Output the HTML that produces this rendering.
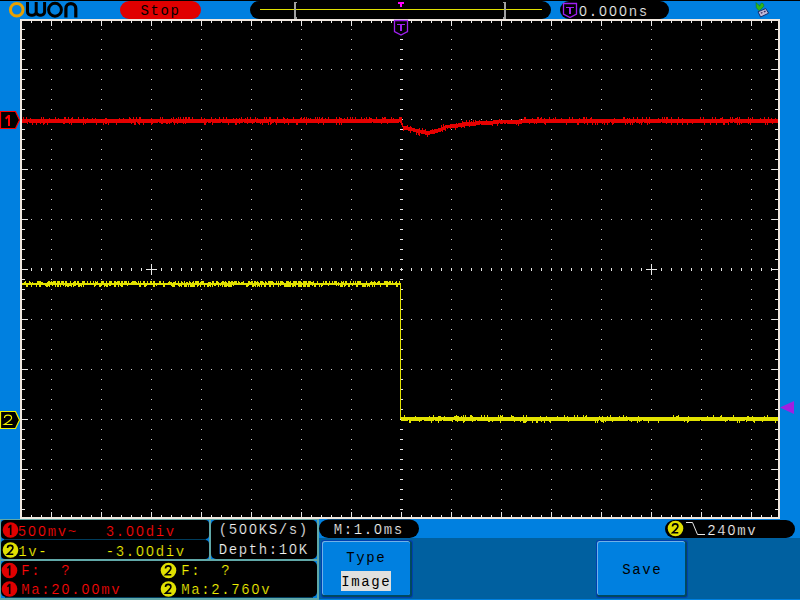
<!DOCTYPE html>
<html><head><meta charset="utf-8"><style>
html,body{margin:0;padding:0;width:800px;height:600px;overflow:hidden;background:#0080E0}
.t{position:absolute;font-family:"Liberation Mono",monospace;font-size:14px;letter-spacing:1.6px;white-space:pre;line-height:16px}
</style></head><body>
<svg width="800" height="600" style="position:absolute;left:0;top:0" shape-rendering="crispEdges"><rect x="0" y="0" width="800" height="1" fill="#000"/><rect x="20" y="19" width="760" height="500" fill="#F0E8E0"/><rect x="22" y="21" width="756" height="496" fill="#000"/><path d="M31 69h1v1h-1zM41 69h1v1h-1zM51 69h1v1h-1zM61 69h1v1h-1zM71 69h1v1h-1zM81 69h1v1h-1zM91 69h1v1h-1zM101 69h1v1h-1zM111 69h1v1h-1zM121 69h1v1h-1zM131 69h1v1h-1zM141 69h1v1h-1zM151 69h1v1h-1zM161 69h1v1h-1zM171 69h1v1h-1zM181 69h1v1h-1zM191 69h1v1h-1zM201 69h1v1h-1zM211 69h1v1h-1zM221 69h1v1h-1zM231 69h1v1h-1zM241 69h1v1h-1zM251 69h1v1h-1zM261 69h1v1h-1zM271 69h1v1h-1zM281 69h1v1h-1zM291 69h1v1h-1zM301 69h1v1h-1zM311 69h1v1h-1zM321 69h1v1h-1zM331 69h1v1h-1zM341 69h1v1h-1zM351 69h1v1h-1zM361 69h1v1h-1zM371 69h1v1h-1zM381 69h1v1h-1zM391 69h1v1h-1zM411 69h1v1h-1zM421 69h1v1h-1zM431 69h1v1h-1zM441 69h1v1h-1zM451 69h1v1h-1zM461 69h1v1h-1zM471 69h1v1h-1zM481 69h1v1h-1zM491 69h1v1h-1zM501 69h1v1h-1zM511 69h1v1h-1zM521 69h1v1h-1zM531 69h1v1h-1zM541 69h1v1h-1zM551 69h1v1h-1zM561 69h1v1h-1zM571 69h1v1h-1zM581 69h1v1h-1zM591 69h1v1h-1zM601 69h1v1h-1zM611 69h1v1h-1zM621 69h1v1h-1zM631 69h1v1h-1zM641 69h1v1h-1zM651 69h1v1h-1zM661 69h1v1h-1zM671 69h1v1h-1zM681 69h1v1h-1zM691 69h1v1h-1zM701 69h1v1h-1zM711 69h1v1h-1zM721 69h1v1h-1zM731 69h1v1h-1zM741 69h1v1h-1zM751 69h1v1h-1zM761 69h1v1h-1zM771 69h1v1h-1zM31 119h1v1h-1zM41 119h1v1h-1zM51 119h1v1h-1zM61 119h1v1h-1zM71 119h1v1h-1zM81 119h1v1h-1zM91 119h1v1h-1zM101 119h1v1h-1zM111 119h1v1h-1zM121 119h1v1h-1zM131 119h1v1h-1zM141 119h1v1h-1zM151 119h1v1h-1zM161 119h1v1h-1zM171 119h1v1h-1zM181 119h1v1h-1zM191 119h1v1h-1zM201 119h1v1h-1zM211 119h1v1h-1zM221 119h1v1h-1zM231 119h1v1h-1zM241 119h1v1h-1zM251 119h1v1h-1zM261 119h1v1h-1zM271 119h1v1h-1zM281 119h1v1h-1zM291 119h1v1h-1zM301 119h1v1h-1zM311 119h1v1h-1zM321 119h1v1h-1zM331 119h1v1h-1zM341 119h1v1h-1zM351 119h1v1h-1zM361 119h1v1h-1zM371 119h1v1h-1zM381 119h1v1h-1zM391 119h1v1h-1zM411 119h1v1h-1zM421 119h1v1h-1zM431 119h1v1h-1zM441 119h1v1h-1zM451 119h1v1h-1zM461 119h1v1h-1zM471 119h1v1h-1zM481 119h1v1h-1zM491 119h1v1h-1zM501 119h1v1h-1zM511 119h1v1h-1zM521 119h1v1h-1zM531 119h1v1h-1zM541 119h1v1h-1zM551 119h1v1h-1zM561 119h1v1h-1zM571 119h1v1h-1zM581 119h1v1h-1zM591 119h1v1h-1zM601 119h1v1h-1zM611 119h1v1h-1zM621 119h1v1h-1zM631 119h1v1h-1zM641 119h1v1h-1zM651 119h1v1h-1zM661 119h1v1h-1zM671 119h1v1h-1zM681 119h1v1h-1zM691 119h1v1h-1zM701 119h1v1h-1zM711 119h1v1h-1zM721 119h1v1h-1zM731 119h1v1h-1zM741 119h1v1h-1zM751 119h1v1h-1zM761 119h1v1h-1zM771 119h1v1h-1zM31 169h1v1h-1zM41 169h1v1h-1zM51 169h1v1h-1zM61 169h1v1h-1zM71 169h1v1h-1zM81 169h1v1h-1zM91 169h1v1h-1zM101 169h1v1h-1zM111 169h1v1h-1zM121 169h1v1h-1zM131 169h1v1h-1zM141 169h1v1h-1zM151 169h1v1h-1zM161 169h1v1h-1zM171 169h1v1h-1zM181 169h1v1h-1zM191 169h1v1h-1zM201 169h1v1h-1zM211 169h1v1h-1zM221 169h1v1h-1zM231 169h1v1h-1zM241 169h1v1h-1zM251 169h1v1h-1zM261 169h1v1h-1zM271 169h1v1h-1zM281 169h1v1h-1zM291 169h1v1h-1zM301 169h1v1h-1zM311 169h1v1h-1zM321 169h1v1h-1zM331 169h1v1h-1zM341 169h1v1h-1zM351 169h1v1h-1zM361 169h1v1h-1zM371 169h1v1h-1zM381 169h1v1h-1zM391 169h1v1h-1zM411 169h1v1h-1zM421 169h1v1h-1zM431 169h1v1h-1zM441 169h1v1h-1zM451 169h1v1h-1zM461 169h1v1h-1zM471 169h1v1h-1zM481 169h1v1h-1zM491 169h1v1h-1zM501 169h1v1h-1zM511 169h1v1h-1zM521 169h1v1h-1zM531 169h1v1h-1zM541 169h1v1h-1zM551 169h1v1h-1zM561 169h1v1h-1zM571 169h1v1h-1zM581 169h1v1h-1zM591 169h1v1h-1zM601 169h1v1h-1zM611 169h1v1h-1zM621 169h1v1h-1zM631 169h1v1h-1zM641 169h1v1h-1zM651 169h1v1h-1zM661 169h1v1h-1zM671 169h1v1h-1zM681 169h1v1h-1zM691 169h1v1h-1zM701 169h1v1h-1zM711 169h1v1h-1zM721 169h1v1h-1zM731 169h1v1h-1zM741 169h1v1h-1zM751 169h1v1h-1zM761 169h1v1h-1zM771 169h1v1h-1zM31 219h1v1h-1zM41 219h1v1h-1zM51 219h1v1h-1zM61 219h1v1h-1zM71 219h1v1h-1zM81 219h1v1h-1zM91 219h1v1h-1zM101 219h1v1h-1zM111 219h1v1h-1zM121 219h1v1h-1zM131 219h1v1h-1zM141 219h1v1h-1zM151 219h1v1h-1zM161 219h1v1h-1zM171 219h1v1h-1zM181 219h1v1h-1zM191 219h1v1h-1zM201 219h1v1h-1zM211 219h1v1h-1zM221 219h1v1h-1zM231 219h1v1h-1zM241 219h1v1h-1zM251 219h1v1h-1zM261 219h1v1h-1zM271 219h1v1h-1zM281 219h1v1h-1zM291 219h1v1h-1zM301 219h1v1h-1zM311 219h1v1h-1zM321 219h1v1h-1zM331 219h1v1h-1zM341 219h1v1h-1zM351 219h1v1h-1zM361 219h1v1h-1zM371 219h1v1h-1zM381 219h1v1h-1zM391 219h1v1h-1zM411 219h1v1h-1zM421 219h1v1h-1zM431 219h1v1h-1zM441 219h1v1h-1zM451 219h1v1h-1zM461 219h1v1h-1zM471 219h1v1h-1zM481 219h1v1h-1zM491 219h1v1h-1zM501 219h1v1h-1zM511 219h1v1h-1zM521 219h1v1h-1zM531 219h1v1h-1zM541 219h1v1h-1zM551 219h1v1h-1zM561 219h1v1h-1zM571 219h1v1h-1zM581 219h1v1h-1zM591 219h1v1h-1zM601 219h1v1h-1zM611 219h1v1h-1zM621 219h1v1h-1zM631 219h1v1h-1zM641 219h1v1h-1zM651 219h1v1h-1zM661 219h1v1h-1zM671 219h1v1h-1zM681 219h1v1h-1zM691 219h1v1h-1zM701 219h1v1h-1zM711 219h1v1h-1zM721 219h1v1h-1zM731 219h1v1h-1zM741 219h1v1h-1zM751 219h1v1h-1zM761 219h1v1h-1zM771 219h1v1h-1zM31 319h1v1h-1zM41 319h1v1h-1zM51 319h1v1h-1zM61 319h1v1h-1zM71 319h1v1h-1zM81 319h1v1h-1zM91 319h1v1h-1zM101 319h1v1h-1zM111 319h1v1h-1zM121 319h1v1h-1zM131 319h1v1h-1zM141 319h1v1h-1zM151 319h1v1h-1zM161 319h1v1h-1zM171 319h1v1h-1zM181 319h1v1h-1zM191 319h1v1h-1zM201 319h1v1h-1zM211 319h1v1h-1zM221 319h1v1h-1zM231 319h1v1h-1zM241 319h1v1h-1zM251 319h1v1h-1zM261 319h1v1h-1zM271 319h1v1h-1zM281 319h1v1h-1zM291 319h1v1h-1zM301 319h1v1h-1zM311 319h1v1h-1zM321 319h1v1h-1zM331 319h1v1h-1zM341 319h1v1h-1zM351 319h1v1h-1zM361 319h1v1h-1zM371 319h1v1h-1zM381 319h1v1h-1zM391 319h1v1h-1zM411 319h1v1h-1zM421 319h1v1h-1zM431 319h1v1h-1zM441 319h1v1h-1zM451 319h1v1h-1zM461 319h1v1h-1zM471 319h1v1h-1zM481 319h1v1h-1zM491 319h1v1h-1zM501 319h1v1h-1zM511 319h1v1h-1zM521 319h1v1h-1zM531 319h1v1h-1zM541 319h1v1h-1zM551 319h1v1h-1zM561 319h1v1h-1zM571 319h1v1h-1zM581 319h1v1h-1zM591 319h1v1h-1zM601 319h1v1h-1zM611 319h1v1h-1zM621 319h1v1h-1zM631 319h1v1h-1zM641 319h1v1h-1zM651 319h1v1h-1zM661 319h1v1h-1zM671 319h1v1h-1zM681 319h1v1h-1zM691 319h1v1h-1zM701 319h1v1h-1zM711 319h1v1h-1zM721 319h1v1h-1zM731 319h1v1h-1zM741 319h1v1h-1zM751 319h1v1h-1zM761 319h1v1h-1zM771 319h1v1h-1zM31 369h1v1h-1zM41 369h1v1h-1zM51 369h1v1h-1zM61 369h1v1h-1zM71 369h1v1h-1zM81 369h1v1h-1zM91 369h1v1h-1zM101 369h1v1h-1zM111 369h1v1h-1zM121 369h1v1h-1zM131 369h1v1h-1zM141 369h1v1h-1zM151 369h1v1h-1zM161 369h1v1h-1zM171 369h1v1h-1zM181 369h1v1h-1zM191 369h1v1h-1zM201 369h1v1h-1zM211 369h1v1h-1zM221 369h1v1h-1zM231 369h1v1h-1zM241 369h1v1h-1zM251 369h1v1h-1zM261 369h1v1h-1zM271 369h1v1h-1zM281 369h1v1h-1zM291 369h1v1h-1zM301 369h1v1h-1zM311 369h1v1h-1zM321 369h1v1h-1zM331 369h1v1h-1zM341 369h1v1h-1zM351 369h1v1h-1zM361 369h1v1h-1zM371 369h1v1h-1zM381 369h1v1h-1zM391 369h1v1h-1zM411 369h1v1h-1zM421 369h1v1h-1zM431 369h1v1h-1zM441 369h1v1h-1zM451 369h1v1h-1zM461 369h1v1h-1zM471 369h1v1h-1zM481 369h1v1h-1zM491 369h1v1h-1zM501 369h1v1h-1zM511 369h1v1h-1zM521 369h1v1h-1zM531 369h1v1h-1zM541 369h1v1h-1zM551 369h1v1h-1zM561 369h1v1h-1zM571 369h1v1h-1zM581 369h1v1h-1zM591 369h1v1h-1zM601 369h1v1h-1zM611 369h1v1h-1zM621 369h1v1h-1zM631 369h1v1h-1zM641 369h1v1h-1zM651 369h1v1h-1zM661 369h1v1h-1zM671 369h1v1h-1zM681 369h1v1h-1zM691 369h1v1h-1zM701 369h1v1h-1zM711 369h1v1h-1zM721 369h1v1h-1zM731 369h1v1h-1zM741 369h1v1h-1zM751 369h1v1h-1zM761 369h1v1h-1zM771 369h1v1h-1zM31 419h1v1h-1zM41 419h1v1h-1zM51 419h1v1h-1zM61 419h1v1h-1zM71 419h1v1h-1zM81 419h1v1h-1zM91 419h1v1h-1zM101 419h1v1h-1zM111 419h1v1h-1zM121 419h1v1h-1zM131 419h1v1h-1zM141 419h1v1h-1zM151 419h1v1h-1zM161 419h1v1h-1zM171 419h1v1h-1zM181 419h1v1h-1zM191 419h1v1h-1zM201 419h1v1h-1zM211 419h1v1h-1zM221 419h1v1h-1zM231 419h1v1h-1zM241 419h1v1h-1zM251 419h1v1h-1zM261 419h1v1h-1zM271 419h1v1h-1zM281 419h1v1h-1zM291 419h1v1h-1zM301 419h1v1h-1zM311 419h1v1h-1zM321 419h1v1h-1zM331 419h1v1h-1zM341 419h1v1h-1zM351 419h1v1h-1zM361 419h1v1h-1zM371 419h1v1h-1zM381 419h1v1h-1zM391 419h1v1h-1zM411 419h1v1h-1zM421 419h1v1h-1zM431 419h1v1h-1zM441 419h1v1h-1zM451 419h1v1h-1zM461 419h1v1h-1zM471 419h1v1h-1zM481 419h1v1h-1zM491 419h1v1h-1zM501 419h1v1h-1zM511 419h1v1h-1zM521 419h1v1h-1zM531 419h1v1h-1zM541 419h1v1h-1zM551 419h1v1h-1zM561 419h1v1h-1zM571 419h1v1h-1zM581 419h1v1h-1zM591 419h1v1h-1zM601 419h1v1h-1zM611 419h1v1h-1zM621 419h1v1h-1zM631 419h1v1h-1zM641 419h1v1h-1zM651 419h1v1h-1zM661 419h1v1h-1zM671 419h1v1h-1zM681 419h1v1h-1zM691 419h1v1h-1zM701 419h1v1h-1zM711 419h1v1h-1zM721 419h1v1h-1zM731 419h1v1h-1zM741 419h1v1h-1zM751 419h1v1h-1zM761 419h1v1h-1zM771 419h1v1h-1zM31 469h1v1h-1zM41 469h1v1h-1zM51 469h1v1h-1zM61 469h1v1h-1zM71 469h1v1h-1zM81 469h1v1h-1zM91 469h1v1h-1zM101 469h1v1h-1zM111 469h1v1h-1zM121 469h1v1h-1zM131 469h1v1h-1zM141 469h1v1h-1zM151 469h1v1h-1zM161 469h1v1h-1zM171 469h1v1h-1zM181 469h1v1h-1zM191 469h1v1h-1zM201 469h1v1h-1zM211 469h1v1h-1zM221 469h1v1h-1zM231 469h1v1h-1zM241 469h1v1h-1zM251 469h1v1h-1zM261 469h1v1h-1zM271 469h1v1h-1zM281 469h1v1h-1zM291 469h1v1h-1zM301 469h1v1h-1zM311 469h1v1h-1zM321 469h1v1h-1zM331 469h1v1h-1zM341 469h1v1h-1zM351 469h1v1h-1zM361 469h1v1h-1zM371 469h1v1h-1zM381 469h1v1h-1zM391 469h1v1h-1zM411 469h1v1h-1zM421 469h1v1h-1zM431 469h1v1h-1zM441 469h1v1h-1zM451 469h1v1h-1zM461 469h1v1h-1zM471 469h1v1h-1zM481 469h1v1h-1zM491 469h1v1h-1zM501 469h1v1h-1zM511 469h1v1h-1zM521 469h1v1h-1zM531 469h1v1h-1zM541 469h1v1h-1zM551 469h1v1h-1zM561 469h1v1h-1zM571 469h1v1h-1zM581 469h1v1h-1zM591 469h1v1h-1zM601 469h1v1h-1zM611 469h1v1h-1zM621 469h1v1h-1zM631 469h1v1h-1zM641 469h1v1h-1zM651 469h1v1h-1zM661 469h1v1h-1zM671 469h1v1h-1zM681 469h1v1h-1zM691 469h1v1h-1zM701 469h1v1h-1zM711 469h1v1h-1zM721 469h1v1h-1zM731 469h1v1h-1zM741 469h1v1h-1zM751 469h1v1h-1zM761 469h1v1h-1zM771 469h1v1h-1zM51 29h1v1h-1zM51 39h1v1h-1zM51 49h1v1h-1zM51 59h1v1h-1zM51 79h1v1h-1zM51 89h1v1h-1zM51 99h1v1h-1zM51 109h1v1h-1zM51 129h1v1h-1zM51 139h1v1h-1zM51 149h1v1h-1zM51 159h1v1h-1zM51 179h1v1h-1zM51 189h1v1h-1zM51 199h1v1h-1zM51 209h1v1h-1zM51 229h1v1h-1zM51 239h1v1h-1zM51 249h1v1h-1zM51 259h1v1h-1zM51 279h1v1h-1zM51 289h1v1h-1zM51 299h1v1h-1zM51 309h1v1h-1zM51 329h1v1h-1zM51 339h1v1h-1zM51 349h1v1h-1zM51 359h1v1h-1zM51 379h1v1h-1zM51 389h1v1h-1zM51 399h1v1h-1zM51 409h1v1h-1zM51 429h1v1h-1zM51 439h1v1h-1zM51 449h1v1h-1zM51 459h1v1h-1zM51 479h1v1h-1zM51 489h1v1h-1zM51 499h1v1h-1zM51 509h1v1h-1zM101 29h1v1h-1zM101 39h1v1h-1zM101 49h1v1h-1zM101 59h1v1h-1zM101 79h1v1h-1zM101 89h1v1h-1zM101 99h1v1h-1zM101 109h1v1h-1zM101 129h1v1h-1zM101 139h1v1h-1zM101 149h1v1h-1zM101 159h1v1h-1zM101 179h1v1h-1zM101 189h1v1h-1zM101 199h1v1h-1zM101 209h1v1h-1zM101 229h1v1h-1zM101 239h1v1h-1zM101 249h1v1h-1zM101 259h1v1h-1zM101 279h1v1h-1zM101 289h1v1h-1zM101 299h1v1h-1zM101 309h1v1h-1zM101 329h1v1h-1zM101 339h1v1h-1zM101 349h1v1h-1zM101 359h1v1h-1zM101 379h1v1h-1zM101 389h1v1h-1zM101 399h1v1h-1zM101 409h1v1h-1zM101 429h1v1h-1zM101 439h1v1h-1zM101 449h1v1h-1zM101 459h1v1h-1zM101 479h1v1h-1zM101 489h1v1h-1zM101 499h1v1h-1zM101 509h1v1h-1zM151 29h1v1h-1zM151 39h1v1h-1zM151 49h1v1h-1zM151 59h1v1h-1zM151 79h1v1h-1zM151 89h1v1h-1zM151 99h1v1h-1zM151 109h1v1h-1zM151 129h1v1h-1zM151 139h1v1h-1zM151 149h1v1h-1zM151 159h1v1h-1zM151 179h1v1h-1zM151 189h1v1h-1zM151 199h1v1h-1zM151 209h1v1h-1zM151 229h1v1h-1zM151 239h1v1h-1zM151 249h1v1h-1zM151 259h1v1h-1zM151 279h1v1h-1zM151 289h1v1h-1zM151 299h1v1h-1zM151 309h1v1h-1zM151 329h1v1h-1zM151 339h1v1h-1zM151 349h1v1h-1zM151 359h1v1h-1zM151 379h1v1h-1zM151 389h1v1h-1zM151 399h1v1h-1zM151 409h1v1h-1zM151 429h1v1h-1zM151 439h1v1h-1zM151 449h1v1h-1zM151 459h1v1h-1zM151 479h1v1h-1zM151 489h1v1h-1zM151 499h1v1h-1zM151 509h1v1h-1zM201 29h1v1h-1zM201 39h1v1h-1zM201 49h1v1h-1zM201 59h1v1h-1zM201 79h1v1h-1zM201 89h1v1h-1zM201 99h1v1h-1zM201 109h1v1h-1zM201 129h1v1h-1zM201 139h1v1h-1zM201 149h1v1h-1zM201 159h1v1h-1zM201 179h1v1h-1zM201 189h1v1h-1zM201 199h1v1h-1zM201 209h1v1h-1zM201 229h1v1h-1zM201 239h1v1h-1zM201 249h1v1h-1zM201 259h1v1h-1zM201 279h1v1h-1zM201 289h1v1h-1zM201 299h1v1h-1zM201 309h1v1h-1zM201 329h1v1h-1zM201 339h1v1h-1zM201 349h1v1h-1zM201 359h1v1h-1zM201 379h1v1h-1zM201 389h1v1h-1zM201 399h1v1h-1zM201 409h1v1h-1zM201 429h1v1h-1zM201 439h1v1h-1zM201 449h1v1h-1zM201 459h1v1h-1zM201 479h1v1h-1zM201 489h1v1h-1zM201 499h1v1h-1zM201 509h1v1h-1zM251 29h1v1h-1zM251 39h1v1h-1zM251 49h1v1h-1zM251 59h1v1h-1zM251 79h1v1h-1zM251 89h1v1h-1zM251 99h1v1h-1zM251 109h1v1h-1zM251 129h1v1h-1zM251 139h1v1h-1zM251 149h1v1h-1zM251 159h1v1h-1zM251 179h1v1h-1zM251 189h1v1h-1zM251 199h1v1h-1zM251 209h1v1h-1zM251 229h1v1h-1zM251 239h1v1h-1zM251 249h1v1h-1zM251 259h1v1h-1zM251 279h1v1h-1zM251 289h1v1h-1zM251 299h1v1h-1zM251 309h1v1h-1zM251 329h1v1h-1zM251 339h1v1h-1zM251 349h1v1h-1zM251 359h1v1h-1zM251 379h1v1h-1zM251 389h1v1h-1zM251 399h1v1h-1zM251 409h1v1h-1zM251 429h1v1h-1zM251 439h1v1h-1zM251 449h1v1h-1zM251 459h1v1h-1zM251 479h1v1h-1zM251 489h1v1h-1zM251 499h1v1h-1zM251 509h1v1h-1zM301 29h1v1h-1zM301 39h1v1h-1zM301 49h1v1h-1zM301 59h1v1h-1zM301 79h1v1h-1zM301 89h1v1h-1zM301 99h1v1h-1zM301 109h1v1h-1zM301 129h1v1h-1zM301 139h1v1h-1zM301 149h1v1h-1zM301 159h1v1h-1zM301 179h1v1h-1zM301 189h1v1h-1zM301 199h1v1h-1zM301 209h1v1h-1zM301 229h1v1h-1zM301 239h1v1h-1zM301 249h1v1h-1zM301 259h1v1h-1zM301 279h1v1h-1zM301 289h1v1h-1zM301 299h1v1h-1zM301 309h1v1h-1zM301 329h1v1h-1zM301 339h1v1h-1zM301 349h1v1h-1zM301 359h1v1h-1zM301 379h1v1h-1zM301 389h1v1h-1zM301 399h1v1h-1zM301 409h1v1h-1zM301 429h1v1h-1zM301 439h1v1h-1zM301 449h1v1h-1zM301 459h1v1h-1zM301 479h1v1h-1zM301 489h1v1h-1zM301 499h1v1h-1zM301 509h1v1h-1zM351 29h1v1h-1zM351 39h1v1h-1zM351 49h1v1h-1zM351 59h1v1h-1zM351 79h1v1h-1zM351 89h1v1h-1zM351 99h1v1h-1zM351 109h1v1h-1zM351 129h1v1h-1zM351 139h1v1h-1zM351 149h1v1h-1zM351 159h1v1h-1zM351 179h1v1h-1zM351 189h1v1h-1zM351 199h1v1h-1zM351 209h1v1h-1zM351 229h1v1h-1zM351 239h1v1h-1zM351 249h1v1h-1zM351 259h1v1h-1zM351 279h1v1h-1zM351 289h1v1h-1zM351 299h1v1h-1zM351 309h1v1h-1zM351 329h1v1h-1zM351 339h1v1h-1zM351 349h1v1h-1zM351 359h1v1h-1zM351 379h1v1h-1zM351 389h1v1h-1zM351 399h1v1h-1zM351 409h1v1h-1zM351 429h1v1h-1zM351 439h1v1h-1zM351 449h1v1h-1zM351 459h1v1h-1zM351 479h1v1h-1zM351 489h1v1h-1zM351 499h1v1h-1zM351 509h1v1h-1zM451 29h1v1h-1zM451 39h1v1h-1zM451 49h1v1h-1zM451 59h1v1h-1zM451 79h1v1h-1zM451 89h1v1h-1zM451 99h1v1h-1zM451 109h1v1h-1zM451 129h1v1h-1zM451 139h1v1h-1zM451 149h1v1h-1zM451 159h1v1h-1zM451 179h1v1h-1zM451 189h1v1h-1zM451 199h1v1h-1zM451 209h1v1h-1zM451 229h1v1h-1zM451 239h1v1h-1zM451 249h1v1h-1zM451 259h1v1h-1zM451 279h1v1h-1zM451 289h1v1h-1zM451 299h1v1h-1zM451 309h1v1h-1zM451 329h1v1h-1zM451 339h1v1h-1zM451 349h1v1h-1zM451 359h1v1h-1zM451 379h1v1h-1zM451 389h1v1h-1zM451 399h1v1h-1zM451 409h1v1h-1zM451 429h1v1h-1zM451 439h1v1h-1zM451 449h1v1h-1zM451 459h1v1h-1zM451 479h1v1h-1zM451 489h1v1h-1zM451 499h1v1h-1zM451 509h1v1h-1zM501 29h1v1h-1zM501 39h1v1h-1zM501 49h1v1h-1zM501 59h1v1h-1zM501 79h1v1h-1zM501 89h1v1h-1zM501 99h1v1h-1zM501 109h1v1h-1zM501 129h1v1h-1zM501 139h1v1h-1zM501 149h1v1h-1zM501 159h1v1h-1zM501 179h1v1h-1zM501 189h1v1h-1zM501 199h1v1h-1zM501 209h1v1h-1zM501 229h1v1h-1zM501 239h1v1h-1zM501 249h1v1h-1zM501 259h1v1h-1zM501 279h1v1h-1zM501 289h1v1h-1zM501 299h1v1h-1zM501 309h1v1h-1zM501 329h1v1h-1zM501 339h1v1h-1zM501 349h1v1h-1zM501 359h1v1h-1zM501 379h1v1h-1zM501 389h1v1h-1zM501 399h1v1h-1zM501 409h1v1h-1zM501 429h1v1h-1zM501 439h1v1h-1zM501 449h1v1h-1zM501 459h1v1h-1zM501 479h1v1h-1zM501 489h1v1h-1zM501 499h1v1h-1zM501 509h1v1h-1zM551 29h1v1h-1zM551 39h1v1h-1zM551 49h1v1h-1zM551 59h1v1h-1zM551 79h1v1h-1zM551 89h1v1h-1zM551 99h1v1h-1zM551 109h1v1h-1zM551 129h1v1h-1zM551 139h1v1h-1zM551 149h1v1h-1zM551 159h1v1h-1zM551 179h1v1h-1zM551 189h1v1h-1zM551 199h1v1h-1zM551 209h1v1h-1zM551 229h1v1h-1zM551 239h1v1h-1zM551 249h1v1h-1zM551 259h1v1h-1zM551 279h1v1h-1zM551 289h1v1h-1zM551 299h1v1h-1zM551 309h1v1h-1zM551 329h1v1h-1zM551 339h1v1h-1zM551 349h1v1h-1zM551 359h1v1h-1zM551 379h1v1h-1zM551 389h1v1h-1zM551 399h1v1h-1zM551 409h1v1h-1zM551 429h1v1h-1zM551 439h1v1h-1zM551 449h1v1h-1zM551 459h1v1h-1zM551 479h1v1h-1zM551 489h1v1h-1zM551 499h1v1h-1zM551 509h1v1h-1zM601 29h1v1h-1zM601 39h1v1h-1zM601 49h1v1h-1zM601 59h1v1h-1zM601 79h1v1h-1zM601 89h1v1h-1zM601 99h1v1h-1zM601 109h1v1h-1zM601 129h1v1h-1zM601 139h1v1h-1zM601 149h1v1h-1zM601 159h1v1h-1zM601 179h1v1h-1zM601 189h1v1h-1zM601 199h1v1h-1zM601 209h1v1h-1zM601 229h1v1h-1zM601 239h1v1h-1zM601 249h1v1h-1zM601 259h1v1h-1zM601 279h1v1h-1zM601 289h1v1h-1zM601 299h1v1h-1zM601 309h1v1h-1zM601 329h1v1h-1zM601 339h1v1h-1zM601 349h1v1h-1zM601 359h1v1h-1zM601 379h1v1h-1zM601 389h1v1h-1zM601 399h1v1h-1zM601 409h1v1h-1zM601 429h1v1h-1zM601 439h1v1h-1zM601 449h1v1h-1zM601 459h1v1h-1zM601 479h1v1h-1zM601 489h1v1h-1zM601 499h1v1h-1zM601 509h1v1h-1zM651 29h1v1h-1zM651 39h1v1h-1zM651 49h1v1h-1zM651 59h1v1h-1zM651 79h1v1h-1zM651 89h1v1h-1zM651 99h1v1h-1zM651 109h1v1h-1zM651 129h1v1h-1zM651 139h1v1h-1zM651 149h1v1h-1zM651 159h1v1h-1zM651 179h1v1h-1zM651 189h1v1h-1zM651 199h1v1h-1zM651 209h1v1h-1zM651 229h1v1h-1zM651 239h1v1h-1zM651 249h1v1h-1zM651 259h1v1h-1zM651 279h1v1h-1zM651 289h1v1h-1zM651 299h1v1h-1zM651 309h1v1h-1zM651 329h1v1h-1zM651 339h1v1h-1zM651 349h1v1h-1zM651 359h1v1h-1zM651 379h1v1h-1zM651 389h1v1h-1zM651 399h1v1h-1zM651 409h1v1h-1zM651 429h1v1h-1zM651 439h1v1h-1zM651 449h1v1h-1zM651 459h1v1h-1zM651 479h1v1h-1zM651 489h1v1h-1zM651 499h1v1h-1zM651 509h1v1h-1zM701 29h1v1h-1zM701 39h1v1h-1zM701 49h1v1h-1zM701 59h1v1h-1zM701 79h1v1h-1zM701 89h1v1h-1zM701 99h1v1h-1zM701 109h1v1h-1zM701 129h1v1h-1zM701 139h1v1h-1zM701 149h1v1h-1zM701 159h1v1h-1zM701 179h1v1h-1zM701 189h1v1h-1zM701 199h1v1h-1zM701 209h1v1h-1zM701 229h1v1h-1zM701 239h1v1h-1zM701 249h1v1h-1zM701 259h1v1h-1zM701 279h1v1h-1zM701 289h1v1h-1zM701 299h1v1h-1zM701 309h1v1h-1zM701 329h1v1h-1zM701 339h1v1h-1zM701 349h1v1h-1zM701 359h1v1h-1zM701 379h1v1h-1zM701 389h1v1h-1zM701 399h1v1h-1zM701 409h1v1h-1zM701 429h1v1h-1zM701 439h1v1h-1zM701 449h1v1h-1zM701 459h1v1h-1zM701 479h1v1h-1zM701 489h1v1h-1zM701 499h1v1h-1zM701 509h1v1h-1zM751 29h1v1h-1zM751 39h1v1h-1zM751 49h1v1h-1zM751 59h1v1h-1zM751 79h1v1h-1zM751 89h1v1h-1zM751 99h1v1h-1zM751 109h1v1h-1zM751 129h1v1h-1zM751 139h1v1h-1zM751 149h1v1h-1zM751 159h1v1h-1zM751 179h1v1h-1zM751 189h1v1h-1zM751 199h1v1h-1zM751 209h1v1h-1zM751 229h1v1h-1zM751 239h1v1h-1zM751 249h1v1h-1zM751 259h1v1h-1zM751 279h1v1h-1zM751 289h1v1h-1zM751 299h1v1h-1zM751 309h1v1h-1zM751 329h1v1h-1zM751 339h1v1h-1zM751 349h1v1h-1zM751 359h1v1h-1zM751 379h1v1h-1zM751 389h1v1h-1zM751 399h1v1h-1zM751 409h1v1h-1zM751 429h1v1h-1zM751 439h1v1h-1zM751 449h1v1h-1zM751 459h1v1h-1zM751 479h1v1h-1zM751 489h1v1h-1zM751 499h1v1h-1zM751 509h1v1h-1z" fill="#C8C8C8"/><path d="M31 21h1v2h-1zM31 515h1v2h-1zM31 268h1v3h-1zM41 21h1v2h-1zM41 515h1v2h-1zM41 268h1v3h-1zM51 21h1v5h-1zM51 512h1v5h-1zM51 268h1v3h-1zM61 21h1v2h-1zM61 515h1v2h-1zM61 268h1v3h-1zM71 21h1v2h-1zM71 515h1v2h-1zM71 268h1v3h-1zM81 21h1v2h-1zM81 515h1v2h-1zM81 268h1v3h-1zM91 21h1v2h-1zM91 515h1v2h-1zM91 268h1v3h-1zM101 21h1v5h-1zM101 512h1v5h-1zM101 268h1v3h-1zM111 21h1v2h-1zM111 515h1v2h-1zM111 268h1v3h-1zM121 21h1v2h-1zM121 515h1v2h-1zM121 268h1v3h-1zM131 21h1v2h-1zM131 515h1v2h-1zM131 268h1v3h-1zM141 21h1v2h-1zM141 515h1v2h-1zM141 268h1v3h-1zM151 21h1v5h-1zM151 512h1v5h-1zM151 268h1v3h-1zM161 21h1v2h-1zM161 515h1v2h-1zM161 268h1v3h-1zM171 21h1v2h-1zM171 515h1v2h-1zM171 268h1v3h-1zM181 21h1v2h-1zM181 515h1v2h-1zM181 268h1v3h-1zM191 21h1v2h-1zM191 515h1v2h-1zM191 268h1v3h-1zM201 21h1v5h-1zM201 512h1v5h-1zM201 268h1v3h-1zM211 21h1v2h-1zM211 515h1v2h-1zM211 268h1v3h-1zM221 21h1v2h-1zM221 515h1v2h-1zM221 268h1v3h-1zM231 21h1v2h-1zM231 515h1v2h-1zM231 268h1v3h-1zM241 21h1v2h-1zM241 515h1v2h-1zM241 268h1v3h-1zM251 21h1v5h-1zM251 512h1v5h-1zM251 268h1v3h-1zM261 21h1v2h-1zM261 515h1v2h-1zM261 268h1v3h-1zM271 21h1v2h-1zM271 515h1v2h-1zM271 268h1v3h-1zM281 21h1v2h-1zM281 515h1v2h-1zM281 268h1v3h-1zM291 21h1v2h-1zM291 515h1v2h-1zM291 268h1v3h-1zM301 21h1v5h-1zM301 512h1v5h-1zM301 268h1v3h-1zM311 21h1v2h-1zM311 515h1v2h-1zM311 268h1v3h-1zM321 21h1v2h-1zM321 515h1v2h-1zM321 268h1v3h-1zM331 21h1v2h-1zM331 515h1v2h-1zM331 268h1v3h-1zM341 21h1v2h-1zM341 515h1v2h-1zM341 268h1v3h-1zM351 21h1v5h-1zM351 512h1v5h-1zM351 268h1v3h-1zM361 21h1v2h-1zM361 515h1v2h-1zM361 268h1v3h-1zM371 21h1v2h-1zM371 515h1v2h-1zM371 268h1v3h-1zM381 21h1v2h-1zM381 515h1v2h-1zM381 268h1v3h-1zM391 21h1v2h-1zM391 515h1v2h-1zM391 268h1v3h-1zM401 21h1v5h-1zM401 512h1v5h-1zM411 21h1v2h-1zM411 515h1v2h-1zM411 268h1v3h-1zM421 21h1v2h-1zM421 515h1v2h-1zM421 268h1v3h-1zM431 21h1v2h-1zM431 515h1v2h-1zM431 268h1v3h-1zM441 21h1v2h-1zM441 515h1v2h-1zM441 268h1v3h-1zM451 21h1v5h-1zM451 512h1v5h-1zM451 268h1v3h-1zM461 21h1v2h-1zM461 515h1v2h-1zM461 268h1v3h-1zM471 21h1v2h-1zM471 515h1v2h-1zM471 268h1v3h-1zM481 21h1v2h-1zM481 515h1v2h-1zM481 268h1v3h-1zM491 21h1v2h-1zM491 515h1v2h-1zM491 268h1v3h-1zM501 21h1v5h-1zM501 512h1v5h-1zM501 268h1v3h-1zM511 21h1v2h-1zM511 515h1v2h-1zM511 268h1v3h-1zM521 21h1v2h-1zM521 515h1v2h-1zM521 268h1v3h-1zM531 21h1v2h-1zM531 515h1v2h-1zM531 268h1v3h-1zM541 21h1v2h-1zM541 515h1v2h-1zM541 268h1v3h-1zM551 21h1v5h-1zM551 512h1v5h-1zM551 268h1v3h-1zM561 21h1v2h-1zM561 515h1v2h-1zM561 268h1v3h-1zM571 21h1v2h-1zM571 515h1v2h-1zM571 268h1v3h-1zM581 21h1v2h-1zM581 515h1v2h-1zM581 268h1v3h-1zM591 21h1v2h-1zM591 515h1v2h-1zM591 268h1v3h-1zM601 21h1v5h-1zM601 512h1v5h-1zM601 268h1v3h-1zM611 21h1v2h-1zM611 515h1v2h-1zM611 268h1v3h-1zM621 21h1v2h-1zM621 515h1v2h-1zM621 268h1v3h-1zM631 21h1v2h-1zM631 515h1v2h-1zM631 268h1v3h-1zM641 21h1v2h-1zM641 515h1v2h-1zM641 268h1v3h-1zM651 21h1v5h-1zM651 512h1v5h-1zM651 268h1v3h-1zM661 21h1v2h-1zM661 515h1v2h-1zM661 268h1v3h-1zM671 21h1v2h-1zM671 515h1v2h-1zM671 268h1v3h-1zM681 21h1v2h-1zM681 515h1v2h-1zM681 268h1v3h-1zM691 21h1v2h-1zM691 515h1v2h-1zM691 268h1v3h-1zM701 21h1v5h-1zM701 512h1v5h-1zM701 268h1v3h-1zM711 21h1v2h-1zM711 515h1v2h-1zM711 268h1v3h-1zM721 21h1v2h-1zM721 515h1v2h-1zM721 268h1v3h-1zM731 21h1v2h-1zM731 515h1v2h-1zM731 268h1v3h-1zM741 21h1v2h-1zM741 515h1v2h-1zM741 268h1v3h-1zM751 21h1v5h-1zM751 512h1v5h-1zM751 268h1v3h-1zM761 21h1v2h-1zM761 515h1v2h-1zM761 268h1v3h-1zM771 21h1v2h-1zM771 515h1v2h-1zM771 268h1v3h-1zM22 29h3v1h-3zM775 29h3v1h-3zM400 29h3v1h-3zM22 39h3v1h-3zM775 39h3v1h-3zM400 39h3v1h-3zM22 49h3v1h-3zM775 49h3v1h-3zM400 49h3v1h-3zM22 59h3v1h-3zM775 59h3v1h-3zM400 59h3v1h-3zM22 69h6v1h-6zM772 69h6v1h-6zM400 69h3v1h-3zM22 79h3v1h-3zM775 79h3v1h-3zM400 79h3v1h-3zM22 89h3v1h-3zM775 89h3v1h-3zM400 89h3v1h-3zM22 99h3v1h-3zM775 99h3v1h-3zM400 99h3v1h-3zM22 109h3v1h-3zM775 109h3v1h-3zM400 109h3v1h-3zM22 119h6v1h-6zM772 119h6v1h-6zM400 119h3v1h-3zM22 129h3v1h-3zM775 129h3v1h-3zM400 129h3v1h-3zM22 139h3v1h-3zM775 139h3v1h-3zM400 139h3v1h-3zM22 149h3v1h-3zM775 149h3v1h-3zM400 149h3v1h-3zM22 159h3v1h-3zM775 159h3v1h-3zM400 159h3v1h-3zM22 169h6v1h-6zM772 169h6v1h-6zM400 169h3v1h-3zM22 179h3v1h-3zM775 179h3v1h-3zM400 179h3v1h-3zM22 189h3v1h-3zM775 189h3v1h-3zM400 189h3v1h-3zM22 199h3v1h-3zM775 199h3v1h-3zM400 199h3v1h-3zM22 209h3v1h-3zM775 209h3v1h-3zM400 209h3v1h-3zM22 219h6v1h-6zM772 219h6v1h-6zM400 219h3v1h-3zM22 229h3v1h-3zM775 229h3v1h-3zM400 229h3v1h-3zM22 239h3v1h-3zM775 239h3v1h-3zM400 239h3v1h-3zM22 249h3v1h-3zM775 249h3v1h-3zM400 249h3v1h-3zM22 259h3v1h-3zM775 259h3v1h-3zM400 259h3v1h-3zM22 269h6v1h-6zM772 269h6v1h-6zM22 279h3v1h-3zM775 279h3v1h-3zM400 279h3v1h-3zM22 289h3v1h-3zM775 289h3v1h-3zM400 289h3v1h-3zM22 299h3v1h-3zM775 299h3v1h-3zM400 299h3v1h-3zM22 309h3v1h-3zM775 309h3v1h-3zM400 309h3v1h-3zM22 319h6v1h-6zM772 319h6v1h-6zM400 319h3v1h-3zM22 329h3v1h-3zM775 329h3v1h-3zM400 329h3v1h-3zM22 339h3v1h-3zM775 339h3v1h-3zM400 339h3v1h-3zM22 349h3v1h-3zM775 349h3v1h-3zM400 349h3v1h-3zM22 359h3v1h-3zM775 359h3v1h-3zM400 359h3v1h-3zM22 369h6v1h-6zM772 369h6v1h-6zM400 369h3v1h-3zM22 379h3v1h-3zM775 379h3v1h-3zM400 379h3v1h-3zM22 389h3v1h-3zM775 389h3v1h-3zM400 389h3v1h-3zM22 399h3v1h-3zM775 399h3v1h-3zM400 399h3v1h-3zM22 409h3v1h-3zM775 409h3v1h-3zM400 409h3v1h-3zM22 419h6v1h-6zM772 419h6v1h-6zM400 419h3v1h-3zM22 429h3v1h-3zM775 429h3v1h-3zM400 429h3v1h-3zM22 439h3v1h-3zM775 439h3v1h-3zM400 439h3v1h-3zM22 449h3v1h-3zM775 449h3v1h-3zM400 449h3v1h-3zM22 459h3v1h-3zM775 459h3v1h-3zM400 459h3v1h-3zM22 469h6v1h-6zM772 469h6v1h-6zM400 469h3v1h-3zM22 479h3v1h-3zM775 479h3v1h-3zM400 479h3v1h-3zM22 489h3v1h-3zM775 489h3v1h-3zM400 489h3v1h-3zM22 499h3v1h-3zM775 499h3v1h-3zM400 499h3v1h-3zM22 509h3v1h-3zM775 509h3v1h-3zM400 509h3v1h-3zM400 269h3v1h-3z M401 268h1v3h-1zM146 269h11v1h-11z M151 264h1v11h-1zM646 269h11v1h-11z M651 264h1v11h-1z" fill="#E8E8E8"/><path d="M22 119h1v4h-1zM23 117h1v6h-1zM24 119h1v4h-1zM25 119h1v4h-1zM26 117h1v6h-1zM27 119h1v5h-1zM28 119h1v3h-1zM29 119h1v4h-1zM30 118h1v5h-1zM31 119h1v4h-1zM32 119h1v6h-1zM33 119h1v4h-1zM34 119h1v4h-1zM35 119h1v4h-1zM36 119h1v6h-1zM37 119h1v4h-1zM38 119h1v4h-1zM39 119h1v4h-1zM40 119h1v5h-1zM41 117h1v6h-1zM42 119h1v4h-1zM43 117h1v8h-1zM44 119h1v5h-1zM45 119h1v4h-1zM46 119h1v4h-1zM47 119h1v6h-1zM48 119h1v4h-1zM49 118h1v5h-1zM50 119h1v4h-1zM51 119h1v4h-1zM52 119h1v4h-1zM53 119h1v4h-1zM54 119h1v4h-1zM55 117h1v6h-1zM56 119h1v4h-1zM57 119h1v4h-1zM58 118h1v5h-1zM59 119h1v4h-1zM60 119h1v4h-1zM61 119h1v4h-1zM62 119h1v4h-1zM63 119h1v5h-1zM64 117h1v7h-1zM65 117h1v6h-1zM66 119h1v4h-1zM67 119h1v4h-1zM68 117h1v6h-1zM69 119h1v5h-1zM70 119h1v4h-1zM71 118h1v7h-1zM72 117h1v6h-1zM73 119h1v4h-1zM74 119h1v4h-1zM75 119h1v4h-1zM76 119h1v4h-1zM77 119h1v4h-1zM78 117h1v6h-1zM79 119h1v4h-1zM80 119h1v4h-1zM81 119h1v4h-1zM82 119h1v4h-1zM83 117h1v8h-1zM84 119h1v4h-1zM85 119h1v5h-1zM86 119h1v4h-1zM87 118h1v5h-1zM88 119h1v4h-1zM89 119h1v4h-1zM90 119h1v4h-1zM91 119h1v4h-1zM92 118h1v5h-1zM93 119h1v4h-1zM94 119h1v4h-1zM95 118h1v5h-1zM96 119h1v6h-1zM97 119h1v4h-1zM98 119h1v4h-1zM99 119h1v4h-1zM100 119h1v4h-1zM101 119h1v4h-1zM102 119h1v4h-1zM103 119h1v6h-1zM104 119h1v4h-1zM105 118h1v6h-1zM106 118h1v6h-1zM107 119h1v4h-1zM108 119h1v6h-1zM109 119h1v4h-1zM110 119h1v4h-1zM111 119h1v4h-1zM112 119h1v4h-1zM113 119h1v4h-1zM114 119h1v4h-1zM115 119h1v4h-1zM116 119h1v6h-1zM117 119h1v4h-1zM118 119h1v4h-1zM119 118h1v5h-1zM120 119h1v4h-1zM121 119h1v4h-1zM122 119h1v4h-1zM123 118h1v5h-1zM124 119h1v4h-1zM125 119h1v4h-1zM126 119h1v4h-1zM127 119h1v4h-1zM128 119h1v4h-1zM129 117h1v6h-1zM130 118h1v5h-1zM131 119h1v5h-1zM132 119h1v4h-1zM133 117h1v6h-1zM134 119h1v6h-1zM135 119h1v6h-1zM136 117h1v5h-1zM137 119h1v4h-1zM138 119h1v5h-1zM139 117h1v8h-1zM140 117h1v6h-1zM141 119h1v4h-1zM142 119h1v4h-1zM143 119h1v6h-1zM144 119h1v4h-1zM145 119h1v4h-1zM146 119h1v4h-1zM147 119h1v4h-1zM148 119h1v4h-1zM149 119h1v4h-1zM150 119h1v4h-1zM151 118h1v7h-1zM152 119h1v5h-1zM153 119h1v4h-1zM154 119h1v4h-1zM155 119h1v4h-1zM156 119h1v4h-1zM157 119h1v4h-1zM158 119h1v3h-1zM159 119h1v4h-1zM160 117h1v6h-1zM161 119h1v5h-1zM162 117h1v7h-1zM163 119h1v4h-1zM164 119h1v4h-1zM165 119h1v4h-1zM166 119h1v5h-1zM167 119h1v5h-1zM168 119h1v4h-1zM169 119h1v5h-1zM170 119h1v4h-1zM171 118h1v5h-1zM172 119h1v3h-1zM173 117h1v6h-1zM174 119h1v6h-1zM175 119h1v4h-1zM176 118h1v5h-1zM177 119h1v5h-1zM178 117h1v6h-1zM179 119h1v4h-1zM180 117h1v6h-1zM181 119h1v4h-1zM182 119h1v4h-1zM183 117h1v7h-1zM184 119h1v4h-1zM185 117h1v7h-1zM186 117h1v6h-1zM187 119h1v4h-1zM188 117h1v6h-1zM189 117h1v6h-1zM190 119h1v4h-1zM191 119h1v4h-1zM192 117h1v6h-1zM193 119h1v4h-1zM194 119h1v4h-1zM195 119h1v4h-1zM196 119h1v4h-1zM197 119h1v4h-1zM198 119h1v4h-1zM199 119h1v4h-1zM200 119h1v4h-1zM201 117h1v6h-1zM202 119h1v4h-1zM203 119h1v4h-1zM204 118h1v7h-1zM205 119h1v6h-1zM206 119h1v4h-1zM207 119h1v3h-1zM208 119h1v4h-1zM209 119h1v4h-1zM210 119h1v4h-1zM211 117h1v5h-1zM212 119h1v6h-1zM213 119h1v4h-1zM214 119h1v4h-1zM215 118h1v5h-1zM216 119h1v4h-1zM217 119h1v4h-1zM218 119h1v4h-1zM219 117h1v6h-1zM220 119h1v4h-1zM221 119h1v3h-1zM222 119h1v4h-1zM223 117h1v6h-1zM224 119h1v4h-1zM225 119h1v4h-1zM226 117h1v6h-1zM227 119h1v4h-1zM228 119h1v6h-1zM229 119h1v4h-1zM230 119h1v4h-1zM231 119h1v4h-1zM232 119h1v4h-1zM233 118h1v5h-1zM234 119h1v4h-1zM235 119h1v6h-1zM236 118h1v7h-1zM237 119h1v4h-1zM238 119h1v4h-1zM239 118h1v6h-1zM240 119h1v4h-1zM241 117h1v6h-1zM242 119h1v4h-1zM243 119h1v3h-1zM244 119h1v4h-1zM245 118h1v5h-1zM246 119h1v4h-1zM247 117h1v7h-1zM248 119h1v4h-1zM249 119h1v4h-1zM250 117h1v6h-1zM251 119h1v4h-1zM252 119h1v5h-1zM253 119h1v4h-1zM254 119h1v4h-1zM255 117h1v5h-1zM256 119h1v4h-1zM257 118h1v5h-1zM258 119h1v4h-1zM259 119h1v4h-1zM260 119h1v5h-1zM261 119h1v4h-1zM262 119h1v6h-1zM263 119h1v4h-1zM264 117h1v6h-1zM265 119h1v4h-1zM266 117h1v6h-1zM267 119h1v4h-1zM268 119h1v6h-1zM269 117h1v5h-1zM270 117h1v8h-1zM271 119h1v5h-1zM272 119h1v4h-1zM273 119h1v4h-1zM274 119h1v3h-1zM275 119h1v4h-1zM276 119h1v6h-1zM277 117h1v6h-1zM278 119h1v4h-1zM279 119h1v4h-1zM280 119h1v4h-1zM281 119h1v4h-1zM282 119h1v4h-1zM283 117h1v6h-1zM284 118h1v6h-1zM285 119h1v4h-1zM286 119h1v4h-1zM287 118h1v5h-1zM288 119h1v6h-1zM289 119h1v4h-1zM290 119h1v4h-1zM291 119h1v4h-1zM292 119h1v4h-1zM293 117h1v6h-1zM294 119h1v4h-1zM295 119h1v4h-1zM296 119h1v6h-1zM297 119h1v6h-1zM298 119h1v4h-1zM299 119h1v4h-1zM300 118h1v5h-1zM301 117h1v6h-1zM302 119h1v4h-1zM303 118h1v5h-1zM304 117h1v6h-1zM305 119h1v4h-1zM306 117h1v8h-1zM307 119h1v4h-1zM308 118h1v5h-1zM309 119h1v4h-1zM310 118h1v5h-1zM311 119h1v4h-1zM312 119h1v4h-1zM313 119h1v4h-1zM314 119h1v4h-1zM315 117h1v6h-1zM316 119h1v4h-1zM317 117h1v6h-1zM318 119h1v5h-1zM319 117h1v6h-1zM320 119h1v4h-1zM321 118h1v5h-1zM322 117h1v6h-1zM323 119h1v6h-1zM324 119h1v4h-1zM325 118h1v5h-1zM326 119h1v4h-1zM327 119h1v4h-1zM328 117h1v6h-1zM329 119h1v4h-1zM330 119h1v4h-1zM331 119h1v4h-1zM332 119h1v4h-1zM333 119h1v4h-1zM334 119h1v4h-1zM335 119h1v4h-1zM336 117h1v8h-1zM337 119h1v4h-1zM338 119h1v4h-1zM339 117h1v8h-1zM340 118h1v5h-1zM341 118h1v7h-1zM342 119h1v4h-1zM343 119h1v4h-1zM344 118h1v5h-1zM345 119h1v4h-1zM346 119h1v4h-1zM347 117h1v6h-1zM348 119h1v4h-1zM349 119h1v4h-1zM350 117h1v6h-1zM351 119h1v4h-1zM352 117h1v6h-1zM353 119h1v4h-1zM354 119h1v4h-1zM355 117h1v6h-1zM356 119h1v4h-1zM357 119h1v4h-1zM358 119h1v4h-1zM359 119h1v4h-1zM360 119h1v4h-1zM361 117h1v6h-1zM362 119h1v4h-1zM363 119h1v4h-1zM364 118h1v5h-1zM365 119h1v4h-1zM366 117h1v6h-1zM367 119h1v4h-1zM368 119h1v4h-1zM369 117h1v6h-1zM370 118h1v5h-1zM371 118h1v5h-1zM372 119h1v3h-1zM373 119h1v4h-1zM374 119h1v4h-1zM375 119h1v4h-1zM376 117h1v6h-1zM377 119h1v4h-1zM378 119h1v4h-1zM379 119h1v4h-1zM380 119h1v4h-1zM381 119h1v5h-1zM382 117h1v6h-1zM383 118h1v5h-1zM384 117h1v6h-1zM385 117h1v6h-1zM386 119h1v4h-1zM387 119h1v5h-1zM388 119h1v4h-1zM389 119h1v4h-1zM390 119h1v4h-1zM391 117h1v6h-1zM392 119h1v4h-1zM393 118h1v5h-1zM394 119h1v4h-1zM395 119h1v4h-1zM396 119h1v4h-1zM397 119h1v4h-1zM398 119h1v4h-1zM399 117h1v5h-1zM400 117h1v6h-1zM401 117h1v8h-1zM402 123h1v4h-1zM403 126h1v5h-1zM404 126h1v4h-1zM405 126h1v4h-1zM406 126h1v4h-1zM407 125h1v5h-1zM408 127h1v4h-1zM409 127h1v4h-1zM410 126h1v7h-1zM411 127h1v4h-1zM412 128h1v3h-1zM413 128h1v4h-1zM414 128h1v4h-1zM415 129h1v3h-1zM416 129h1v6h-1zM417 129h1v4h-1zM418 129h1v6h-1zM419 128h1v8h-1zM420 130h1v3h-1zM421 130h1v4h-1zM422 128h1v6h-1zM423 130h1v4h-1zM424 130h1v4h-1zM425 129h1v6h-1zM426 131h1v4h-1zM427 131h1v6h-1zM428 131h1v4h-1zM429 131h1v4h-1zM430 130h1v4h-1zM431 130h1v4h-1zM432 129h1v5h-1zM433 130h1v4h-1zM434 129h1v5h-1zM435 129h1v4h-1zM436 129h1v4h-1zM437 129h1v4h-1zM438 128h1v4h-1zM439 128h1v4h-1zM440 128h1v4h-1zM441 125h1v6h-1zM442 127h1v5h-1zM443 124h1v6h-1zM444 126h1v4h-1zM445 125h1v6h-1zM446 125h1v3h-1zM447 125h1v4h-1zM448 125h1v3h-1zM449 125h1v3h-1zM450 124h1v5h-1zM451 124h1v4h-1zM452 124h1v4h-1zM453 124h1v4h-1zM454 124h1v4h-1zM455 124h1v6h-1zM456 123h1v5h-1zM457 124h1v4h-1zM458 123h1v4h-1zM459 123h1v4h-1zM460 123h1v4h-1zM461 123h1v5h-1zM462 121h1v6h-1zM463 122h1v5h-1zM464 122h1v6h-1zM465 122h1v4h-1zM466 120h1v6h-1zM467 122h1v4h-1zM468 122h1v4h-1zM469 120h1v7h-1zM470 122h1v4h-1zM471 121h1v5h-1zM472 122h1v4h-1zM473 120h1v6h-1zM474 122h1v4h-1zM475 120h1v6h-1zM476 121h1v4h-1zM477 121h1v4h-1zM478 121h1v4h-1zM479 120h1v5h-1zM480 121h1v3h-1zM481 121h1v4h-1zM482 121h1v4h-1zM483 121h1v4h-1zM484 121h1v4h-1zM485 121h1v4h-1zM486 120h1v5h-1zM487 121h1v4h-1zM488 121h1v4h-1zM489 121h1v4h-1zM490 121h1v4h-1zM491 121h1v4h-1zM492 121h1v5h-1zM493 120h1v4h-1zM494 120h1v4h-1zM495 120h1v4h-1zM496 120h1v4h-1zM497 120h1v6h-1zM498 120h1v4h-1zM499 119h1v4h-1zM500 120h1v4h-1zM501 120h1v4h-1zM502 120h1v4h-1zM503 120h1v3h-1zM504 120h1v4h-1zM505 120h1v4h-1zM506 120h1v3h-1zM507 120h1v4h-1zM508 120h1v4h-1zM509 120h1v4h-1zM510 120h1v4h-1zM511 120h1v4h-1zM512 120h1v4h-1zM513 120h1v4h-1zM514 120h1v4h-1zM515 120h1v4h-1zM516 120h1v5h-1zM517 120h1v4h-1zM518 120h1v6h-1zM519 119h1v5h-1zM520 119h1v5h-1zM521 120h1v4h-1zM522 119h1v4h-1zM523 119h1v4h-1zM524 117h1v6h-1zM525 117h1v6h-1zM526 119h1v4h-1zM527 119h1v4h-1zM528 119h1v4h-1zM529 119h1v5h-1zM530 119h1v4h-1zM531 119h1v4h-1zM532 118h1v5h-1zM533 119h1v4h-1zM534 119h1v5h-1zM535 119h1v4h-1zM536 119h1v5h-1zM537 117h1v6h-1zM538 117h1v6h-1zM539 119h1v4h-1zM540 118h1v5h-1zM541 117h1v6h-1zM542 119h1v4h-1zM543 119h1v4h-1zM544 118h1v6h-1zM545 119h1v6h-1zM546 119h1v4h-1zM547 119h1v4h-1zM548 119h1v4h-1zM549 117h1v6h-1zM550 119h1v4h-1zM551 119h1v4h-1zM552 119h1v4h-1zM553 118h1v5h-1zM554 119h1v4h-1zM555 117h1v6h-1zM556 119h1v4h-1zM557 119h1v4h-1zM558 119h1v4h-1zM559 119h1v4h-1zM560 119h1v4h-1zM561 118h1v5h-1zM562 119h1v4h-1zM563 119h1v4h-1zM564 119h1v4h-1zM565 119h1v4h-1zM566 119h1v6h-1zM567 119h1v4h-1zM568 119h1v4h-1zM569 117h1v6h-1zM570 119h1v4h-1zM571 119h1v4h-1zM572 117h1v6h-1zM573 119h1v4h-1zM574 119h1v4h-1zM575 119h1v4h-1zM576 119h1v4h-1zM577 119h1v6h-1zM578 119h1v6h-1zM579 118h1v5h-1zM580 119h1v4h-1zM581 119h1v4h-1zM582 119h1v4h-1zM583 117h1v6h-1zM584 117h1v7h-1zM585 119h1v4h-1zM586 117h1v6h-1zM587 119h1v6h-1zM588 119h1v4h-1zM589 119h1v4h-1zM590 118h1v5h-1zM591 117h1v6h-1zM592 119h1v6h-1zM593 119h1v4h-1zM594 119h1v4h-1zM595 119h1v6h-1zM596 119h1v4h-1zM597 119h1v6h-1zM598 119h1v4h-1zM599 119h1v4h-1zM600 119h1v4h-1zM601 119h1v4h-1zM602 119h1v5h-1zM603 119h1v4h-1zM604 119h1v6h-1zM605 119h1v4h-1zM606 119h1v4h-1zM607 119h1v6h-1zM608 119h1v4h-1zM609 119h1v4h-1zM610 119h1v3h-1zM611 119h1v4h-1zM612 119h1v6h-1zM613 119h1v5h-1zM614 118h1v5h-1zM615 119h1v4h-1zM616 119h1v4h-1zM617 119h1v4h-1zM618 119h1v4h-1zM619 119h1v4h-1zM620 119h1v4h-1zM621 119h1v4h-1zM622 119h1v4h-1zM623 117h1v6h-1zM624 117h1v6h-1zM625 119h1v6h-1zM626 119h1v4h-1zM627 118h1v6h-1zM628 119h1v4h-1zM629 118h1v5h-1zM630 119h1v6h-1zM631 119h1v4h-1zM632 119h1v6h-1zM633 117h1v6h-1zM634 119h1v4h-1zM635 119h1v3h-1zM636 119h1v4h-1zM637 117h1v6h-1zM638 119h1v4h-1zM639 119h1v5h-1zM640 119h1v4h-1zM641 119h1v6h-1zM642 117h1v6h-1zM643 119h1v3h-1zM644 119h1v4h-1zM645 119h1v4h-1zM646 117h1v6h-1zM647 119h1v6h-1zM648 119h1v4h-1zM649 117h1v7h-1zM650 119h1v4h-1zM651 119h1v4h-1zM652 119h1v4h-1zM653 119h1v4h-1zM654 119h1v4h-1zM655 119h1v4h-1zM656 119h1v4h-1zM657 119h1v4h-1zM658 118h1v5h-1zM659 119h1v4h-1zM660 119h1v4h-1zM661 119h1v3h-1zM662 117h1v6h-1zM663 119h1v4h-1zM664 117h1v6h-1zM665 119h1v4h-1zM666 117h1v7h-1zM667 117h1v6h-1zM668 119h1v4h-1zM669 119h1v4h-1zM670 119h1v4h-1zM671 117h1v8h-1zM672 119h1v4h-1zM673 119h1v4h-1zM674 119h1v4h-1zM675 119h1v4h-1zM676 119h1v4h-1zM677 119h1v6h-1zM678 117h1v6h-1zM679 119h1v4h-1zM680 119h1v4h-1zM681 119h1v4h-1zM682 118h1v7h-1zM683 119h1v4h-1zM684 119h1v4h-1zM685 119h1v4h-1zM686 119h1v4h-1zM687 119h1v6h-1zM688 119h1v4h-1zM689 119h1v4h-1zM690 119h1v4h-1zM691 119h1v4h-1zM692 119h1v5h-1zM693 119h1v4h-1zM694 119h1v4h-1zM695 119h1v4h-1zM696 119h1v4h-1zM697 119h1v4h-1zM698 119h1v4h-1zM699 119h1v4h-1zM700 117h1v6h-1zM701 119h1v4h-1zM702 119h1v4h-1zM703 117h1v6h-1zM704 119h1v6h-1zM705 119h1v4h-1zM706 119h1v4h-1zM707 119h1v4h-1zM708 119h1v4h-1zM709 119h1v4h-1zM710 119h1v6h-1zM711 119h1v4h-1zM712 117h1v6h-1zM713 119h1v4h-1zM714 119h1v4h-1zM715 117h1v6h-1zM716 119h1v6h-1zM717 119h1v4h-1zM718 119h1v4h-1zM719 119h1v4h-1zM720 118h1v5h-1zM721 118h1v5h-1zM722 117h1v6h-1zM723 119h1v6h-1zM724 119h1v6h-1zM725 119h1v4h-1zM726 119h1v4h-1zM727 119h1v4h-1zM728 119h1v6h-1zM729 119h1v3h-1zM730 117h1v6h-1zM731 119h1v4h-1zM732 117h1v6h-1zM733 119h1v3h-1zM734 119h1v4h-1zM735 118h1v5h-1zM736 118h1v5h-1zM737 117h1v8h-1zM738 119h1v4h-1zM739 117h1v8h-1zM740 119h1v4h-1zM741 119h1v5h-1zM742 119h1v4h-1zM743 119h1v4h-1zM744 119h1v4h-1zM745 119h1v4h-1zM746 119h1v4h-1zM747 119h1v4h-1zM748 117h1v7h-1zM749 119h1v4h-1zM750 118h1v7h-1zM751 119h1v4h-1zM752 117h1v6h-1zM753 119h1v4h-1zM754 119h1v4h-1zM755 119h1v4h-1zM756 119h1v4h-1zM757 119h1v4h-1zM758 119h1v4h-1zM759 119h1v4h-1zM760 118h1v5h-1zM761 119h1v4h-1zM762 119h1v4h-1zM763 119h1v4h-1zM764 117h1v6h-1zM765 119h1v6h-1zM766 119h1v4h-1zM767 119h1v6h-1zM768 117h1v6h-1zM769 119h1v4h-1zM770 119h1v4h-1zM771 118h1v5h-1zM772 119h1v5h-1zM773 119h1v4h-1zM774 119h1v4h-1zM775 118h1v5h-1zM776 119h1v4h-1zM777 119h1v4h-1z" fill="#E60000"/><path d="M22 283h1v2h-1zM23 283h1v2h-1zM24 282h1v3h-1zM25 281h1v4h-1zM26 283h1v4h-1zM27 283h1v4h-1zM28 283h1v2h-1zM29 281h1v4h-1zM30 282h1v3h-1zM31 283h1v4h-1zM32 282h1v3h-1zM33 283h1v2h-1zM34 283h1v2h-1zM35 283h1v2h-1zM36 283h1v4h-1zM37 281h1v4h-1zM38 281h1v4h-1zM39 281h1v6h-1zM40 281h1v6h-1zM41 282h1v3h-1zM42 282h1v3h-1zM43 283h1v2h-1zM44 283h1v2h-1zM45 283h1v3h-1zM46 283h1v4h-1zM47 282h1v5h-1zM48 281h1v5h-1zM49 281h1v6h-1zM50 282h1v3h-1zM51 281h1v4h-1zM52 282h1v4h-1zM53 281h1v4h-1zM54 281h1v4h-1zM55 281h1v6h-1zM56 283h1v2h-1zM57 281h1v6h-1zM58 281h1v6h-1zM59 281h1v4h-1zM60 283h1v4h-1zM61 281h1v4h-1zM62 281h1v4h-1zM63 281h1v5h-1zM64 283h1v2h-1zM65 281h1v6h-1zM66 281h1v5h-1zM67 283h1v4h-1zM68 283h1v4h-1zM69 283h1v3h-1zM70 281h1v5h-1zM71 283h1v4h-1zM72 283h1v2h-1zM73 282h1v5h-1zM74 281h1v5h-1zM75 281h1v5h-1zM76 283h1v2h-1zM77 281h1v4h-1zM78 281h1v6h-1zM79 283h1v4h-1zM80 283h1v3h-1zM81 283h1v4h-1zM82 281h1v4h-1zM83 281h1v6h-1zM84 281h1v4h-1zM85 283h1v2h-1zM86 283h1v2h-1zM87 281h1v4h-1zM88 283h1v2h-1zM89 283h1v2h-1zM90 281h1v4h-1zM91 283h1v2h-1zM92 283h1v2h-1zM93 281h1v4h-1zM94 283h1v4h-1zM95 281h1v5h-1zM96 282h1v3h-1zM97 281h1v4h-1zM98 283h1v2h-1zM99 283h1v4h-1zM100 283h1v4h-1zM101 281h1v5h-1zM102 281h1v4h-1zM103 281h1v4h-1zM104 283h1v4h-1zM105 283h1v3h-1zM106 281h1v6h-1zM107 283h1v4h-1zM108 283h1v2h-1zM109 281h1v5h-1zM110 281h1v5h-1zM111 281h1v4h-1zM112 283h1v2h-1zM113 283h1v2h-1zM114 281h1v6h-1zM115 281h1v6h-1zM116 282h1v3h-1zM117 281h1v4h-1zM118 281h1v6h-1zM119 281h1v4h-1zM120 283h1v3h-1zM121 281h1v6h-1zM122 281h1v6h-1zM123 283h1v2h-1zM124 281h1v4h-1zM125 281h1v4h-1zM126 281h1v4h-1zM127 283h1v3h-1zM128 281h1v4h-1zM129 283h1v2h-1zM130 283h1v2h-1zM131 282h1v3h-1zM132 281h1v4h-1zM133 281h1v4h-1zM134 281h1v4h-1zM135 281h1v4h-1zM136 282h1v3h-1zM137 283h1v2h-1zM138 281h1v4h-1zM139 283h1v4h-1zM140 281h1v6h-1zM141 283h1v2h-1zM142 283h1v2h-1zM143 281h1v4h-1zM144 281h1v6h-1zM145 283h1v4h-1zM146 283h1v3h-1zM147 281h1v4h-1zM148 283h1v2h-1zM149 283h1v2h-1zM150 281h1v4h-1zM151 281h1v4h-1zM152 283h1v2h-1zM153 281h1v6h-1zM154 281h1v6h-1zM155 283h1v2h-1zM156 283h1v3h-1zM157 283h1v2h-1zM158 283h1v2h-1zM159 281h1v4h-1zM160 281h1v4h-1zM161 283h1v2h-1zM162 283h1v2h-1zM163 281h1v6h-1zM164 283h1v4h-1zM165 283h1v2h-1zM166 283h1v2h-1zM167 283h1v2h-1zM168 282h1v3h-1zM169 281h1v4h-1zM170 282h1v3h-1zM171 282h1v4h-1zM172 283h1v4h-1zM173 282h1v5h-1zM174 282h1v5h-1zM175 281h1v4h-1zM176 283h1v2h-1zM177 283h1v2h-1zM178 281h1v5h-1zM179 283h1v4h-1zM180 283h1v3h-1zM181 281h1v6h-1zM182 282h1v3h-1zM183 283h1v2h-1zM184 281h1v6h-1zM185 283h1v4h-1zM186 282h1v5h-1zM187 282h1v3h-1zM188 283h1v4h-1zM189 281h1v4h-1zM190 282h1v5h-1zM191 283h1v4h-1zM192 282h1v5h-1zM193 281h1v6h-1zM194 283h1v4h-1zM195 281h1v4h-1zM196 281h1v4h-1zM197 281h1v6h-1zM198 281h1v5h-1zM199 283h1v2h-1zM200 282h1v5h-1zM201 281h1v4h-1zM202 281h1v4h-1zM203 281h1v4h-1zM204 283h1v4h-1zM205 283h1v2h-1zM206 283h1v2h-1zM207 283h1v4h-1zM208 282h1v5h-1zM209 282h1v4h-1zM210 282h1v5h-1zM211 283h1v2h-1zM212 281h1v6h-1zM213 281h1v4h-1zM214 283h1v3h-1zM215 283h1v3h-1zM216 281h1v4h-1zM217 281h1v4h-1zM218 282h1v5h-1zM219 283h1v2h-1zM220 283h1v3h-1zM221 282h1v3h-1zM222 281h1v6h-1zM223 281h1v4h-1zM224 282h1v5h-1zM225 281h1v6h-1zM226 282h1v5h-1zM227 283h1v3h-1zM228 281h1v6h-1zM229 281h1v6h-1zM230 282h1v5h-1zM231 281h1v6h-1zM232 281h1v4h-1zM233 282h1v4h-1zM234 281h1v4h-1zM235 281h1v4h-1zM236 281h1v4h-1zM237 283h1v2h-1zM238 281h1v4h-1zM239 282h1v3h-1zM240 283h1v2h-1zM241 282h1v3h-1zM242 282h1v3h-1zM243 281h1v4h-1zM244 283h1v2h-1zM245 283h1v2h-1zM246 283h1v4h-1zM247 283h1v4h-1zM248 281h1v5h-1zM249 281h1v4h-1zM250 282h1v3h-1zM251 281h1v4h-1zM252 281h1v6h-1zM253 283h1v4h-1zM254 281h1v5h-1zM255 281h1v6h-1zM256 282h1v3h-1zM257 281h1v6h-1zM258 282h1v4h-1zM259 283h1v4h-1zM260 281h1v4h-1zM261 281h1v6h-1zM262 281h1v4h-1zM263 282h1v3h-1zM264 283h1v4h-1zM265 281h1v6h-1zM266 282h1v3h-1zM267 283h1v2h-1zM268 281h1v4h-1zM269 281h1v6h-1zM270 281h1v6h-1zM271 281h1v4h-1zM272 281h1v4h-1zM273 282h1v5h-1zM274 283h1v2h-1zM275 283h1v2h-1zM276 281h1v4h-1zM277 283h1v2h-1zM278 281h1v6h-1zM279 283h1v2h-1zM280 281h1v5h-1zM281 281h1v4h-1zM282 281h1v4h-1zM283 282h1v3h-1zM284 283h1v4h-1zM285 283h1v4h-1zM286 281h1v6h-1zM287 281h1v6h-1zM288 281h1v6h-1zM289 282h1v5h-1zM290 281h1v6h-1zM291 283h1v2h-1zM292 283h1v4h-1zM293 281h1v6h-1zM294 281h1v5h-1zM295 281h1v6h-1zM296 281h1v4h-1zM297 283h1v2h-1zM298 281h1v6h-1zM299 281h1v6h-1zM300 281h1v6h-1zM301 282h1v5h-1zM302 283h1v2h-1zM303 281h1v6h-1zM304 281h1v6h-1zM305 281h1v6h-1zM306 281h1v4h-1zM307 283h1v4h-1zM308 281h1v6h-1zM309 281h1v6h-1zM310 281h1v4h-1zM311 282h1v3h-1zM312 282h1v4h-1zM313 281h1v4h-1zM314 283h1v4h-1zM315 283h1v4h-1zM316 283h1v2h-1zM317 281h1v4h-1zM318 283h1v2h-1zM319 283h1v4h-1zM320 283h1v2h-1zM321 283h1v4h-1zM322 283h1v3h-1zM323 281h1v4h-1zM324 283h1v2h-1zM325 281h1v4h-1zM326 281h1v4h-1zM327 283h1v2h-1zM328 283h1v3h-1zM329 281h1v4h-1zM330 283h1v2h-1zM331 283h1v2h-1zM332 281h1v4h-1zM333 283h1v2h-1zM334 281h1v4h-1zM335 281h1v4h-1zM336 281h1v5h-1zM337 283h1v2h-1zM338 282h1v4h-1zM339 283h1v2h-1zM340 283h1v4h-1zM341 281h1v6h-1zM342 282h1v5h-1zM343 281h1v4h-1zM344 283h1v4h-1zM345 281h1v5h-1zM346 281h1v4h-1zM347 283h1v2h-1zM348 283h1v4h-1zM349 283h1v4h-1zM350 281h1v4h-1zM351 283h1v2h-1zM352 283h1v3h-1zM353 281h1v4h-1zM354 283h1v2h-1zM355 281h1v4h-1zM356 283h1v4h-1zM357 281h1v6h-1zM358 281h1v4h-1zM359 281h1v4h-1zM360 281h1v4h-1zM361 283h1v2h-1zM362 283h1v4h-1zM363 283h1v4h-1zM364 283h1v4h-1zM365 283h1v4h-1zM366 281h1v4h-1zM367 283h1v4h-1zM368 283h1v3h-1zM369 283h1v4h-1zM370 282h1v3h-1zM371 281h1v4h-1zM372 282h1v5h-1zM373 282h1v3h-1zM374 281h1v6h-1zM375 282h1v3h-1zM376 283h1v2h-1zM377 282h1v3h-1zM378 281h1v4h-1zM379 281h1v4h-1zM380 283h1v4h-1zM381 283h1v2h-1zM382 283h1v2h-1zM383 283h1v2h-1zM384 281h1v4h-1zM385 281h1v4h-1zM386 281h1v6h-1zM387 281h1v6h-1zM388 282h1v3h-1zM389 281h1v4h-1zM390 281h1v4h-1zM391 283h1v2h-1zM392 281h1v4h-1zM393 283h1v2h-1zM394 283h1v2h-1zM395 282h1v3h-1zM396 281h1v6h-1zM397 283h1v4h-1zM398 283h1v2h-1zM399 281h1v4h-1zM401 417h1v4h-1zM402 417h1v4h-1zM403 417h1v4h-1zM404 415h1v6h-1zM405 417h1v4h-1zM406 417h1v4h-1zM407 417h1v4h-1zM408 417h1v3h-1zM409 417h1v6h-1zM410 417h1v6h-1zM411 417h1v4h-1zM412 417h1v4h-1zM413 417h1v4h-1zM414 417h1v4h-1zM415 416h1v5h-1zM416 417h1v4h-1zM417 417h1v4h-1zM418 417h1v4h-1zM419 417h1v5h-1zM420 417h1v4h-1zM421 417h1v4h-1zM422 417h1v3h-1zM423 417h1v3h-1zM424 417h1v4h-1zM425 417h1v4h-1zM426 417h1v4h-1zM427 417h1v4h-1zM428 417h1v4h-1zM429 416h1v5h-1zM430 417h1v4h-1zM431 417h1v6h-1zM432 417h1v4h-1zM433 415h1v6h-1zM434 417h1v3h-1zM435 417h1v4h-1zM436 417h1v4h-1zM437 417h1v4h-1zM438 416h1v7h-1zM439 416h1v5h-1zM440 416h1v5h-1zM441 417h1v4h-1zM442 417h1v3h-1zM443 417h1v4h-1zM444 416h1v5h-1zM445 417h1v4h-1zM446 417h1v4h-1zM447 417h1v4h-1zM448 417h1v4h-1zM449 417h1v4h-1zM450 417h1v4h-1zM451 417h1v4h-1zM452 417h1v5h-1zM453 417h1v3h-1zM454 416h1v4h-1zM455 416h1v5h-1zM456 415h1v6h-1zM457 416h1v6h-1zM458 416h1v5h-1zM459 417h1v4h-1zM460 417h1v4h-1zM461 416h1v5h-1zM462 417h1v4h-1zM463 415h1v8h-1zM464 417h1v5h-1zM465 415h1v6h-1zM466 417h1v4h-1zM467 417h1v4h-1zM468 417h1v4h-1zM469 417h1v4h-1zM470 415h1v6h-1zM471 415h1v6h-1zM472 416h1v6h-1zM473 417h1v4h-1zM474 417h1v4h-1zM475 417h1v4h-1zM476 417h1v3h-1zM477 417h1v4h-1zM478 417h1v4h-1zM479 417h1v4h-1zM480 417h1v4h-1zM481 415h1v6h-1zM482 417h1v4h-1zM483 417h1v4h-1zM484 415h1v6h-1zM485 417h1v4h-1zM486 417h1v4h-1zM487 415h1v6h-1zM488 417h1v5h-1zM489 417h1v5h-1zM490 417h1v4h-1zM491 417h1v4h-1zM492 417h1v5h-1zM493 417h1v4h-1zM494 417h1v4h-1zM495 417h1v4h-1zM496 417h1v4h-1zM497 417h1v4h-1zM498 415h1v6h-1zM499 417h1v4h-1zM500 415h1v8h-1zM501 416h1v5h-1zM502 415h1v6h-1zM503 417h1v4h-1zM504 417h1v4h-1zM505 417h1v4h-1zM506 417h1v4h-1zM507 417h1v4h-1zM508 417h1v4h-1zM509 417h1v4h-1zM510 417h1v4h-1zM511 415h1v6h-1zM512 416h1v5h-1zM513 416h1v5h-1zM514 417h1v5h-1zM515 417h1v4h-1zM516 417h1v4h-1zM517 417h1v4h-1zM518 417h1v4h-1zM519 417h1v4h-1zM520 417h1v5h-1zM521 417h1v4h-1zM522 417h1v4h-1zM523 415h1v8h-1zM524 417h1v6h-1zM525 417h1v6h-1zM526 415h1v7h-1zM527 417h1v4h-1zM528 417h1v4h-1zM529 417h1v4h-1zM530 417h1v4h-1zM531 417h1v4h-1zM532 417h1v6h-1zM533 417h1v4h-1zM534 417h1v4h-1zM535 417h1v4h-1zM536 417h1v6h-1zM537 417h1v6h-1zM538 417h1v4h-1zM539 417h1v4h-1zM540 416h1v5h-1zM541 417h1v5h-1zM542 417h1v4h-1zM543 417h1v4h-1zM544 417h1v6h-1zM545 417h1v4h-1zM546 416h1v5h-1zM547 417h1v4h-1zM548 417h1v4h-1zM549 417h1v5h-1zM550 417h1v6h-1zM551 417h1v4h-1zM552 417h1v4h-1zM553 417h1v4h-1zM554 417h1v4h-1zM555 417h1v4h-1zM556 417h1v4h-1zM557 416h1v5h-1zM558 417h1v4h-1zM559 417h1v4h-1zM560 417h1v4h-1zM561 417h1v4h-1zM562 417h1v4h-1zM563 417h1v4h-1zM564 415h1v6h-1zM565 417h1v4h-1zM566 417h1v4h-1zM567 416h1v5h-1zM568 417h1v5h-1zM569 417h1v4h-1zM570 417h1v4h-1zM571 417h1v4h-1zM572 417h1v4h-1zM573 417h1v4h-1zM574 415h1v6h-1zM575 417h1v4h-1zM576 417h1v4h-1zM577 415h1v6h-1zM578 417h1v4h-1zM579 417h1v4h-1zM580 417h1v4h-1zM581 417h1v4h-1zM582 417h1v4h-1zM583 415h1v6h-1zM584 417h1v4h-1zM585 416h1v5h-1zM586 415h1v6h-1zM587 417h1v4h-1zM588 417h1v4h-1zM589 417h1v4h-1zM590 417h1v4h-1zM591 417h1v4h-1zM592 417h1v4h-1zM593 417h1v4h-1zM594 417h1v4h-1zM595 417h1v6h-1zM596 417h1v4h-1zM597 417h1v6h-1zM598 417h1v4h-1zM599 416h1v4h-1zM600 417h1v4h-1zM601 417h1v5h-1zM602 416h1v6h-1zM603 417h1v6h-1zM604 417h1v4h-1zM605 417h1v5h-1zM606 417h1v4h-1zM607 416h1v5h-1zM608 417h1v4h-1zM609 417h1v4h-1zM610 415h1v6h-1zM611 417h1v4h-1zM612 417h1v5h-1zM613 417h1v4h-1zM614 417h1v4h-1zM615 417h1v4h-1zM616 417h1v4h-1zM617 417h1v4h-1zM618 417h1v4h-1zM619 416h1v5h-1zM620 417h1v4h-1zM621 417h1v4h-1zM622 417h1v4h-1zM623 415h1v6h-1zM624 417h1v4h-1zM625 417h1v4h-1zM626 416h1v5h-1zM627 417h1v4h-1zM628 417h1v3h-1zM629 417h1v4h-1zM630 417h1v4h-1zM631 417h1v5h-1zM632 417h1v4h-1zM633 417h1v4h-1zM634 417h1v4h-1zM635 417h1v4h-1zM636 417h1v4h-1zM637 417h1v6h-1zM638 416h1v5h-1zM639 417h1v5h-1zM640 417h1v4h-1zM641 417h1v4h-1zM642 417h1v3h-1zM643 417h1v4h-1zM644 417h1v4h-1zM645 417h1v4h-1zM646 417h1v4h-1zM647 417h1v4h-1zM648 417h1v6h-1zM649 417h1v4h-1zM650 417h1v4h-1zM651 417h1v4h-1zM652 417h1v4h-1zM653 417h1v4h-1zM654 417h1v4h-1zM655 417h1v4h-1zM656 417h1v4h-1zM657 417h1v4h-1zM658 417h1v6h-1zM659 417h1v4h-1zM660 417h1v4h-1zM661 417h1v4h-1zM662 417h1v4h-1zM663 417h1v4h-1zM664 417h1v4h-1zM665 417h1v4h-1zM666 417h1v4h-1zM667 417h1v4h-1zM668 417h1v4h-1zM669 417h1v4h-1zM670 417h1v4h-1zM671 417h1v4h-1zM672 417h1v4h-1zM673 415h1v6h-1zM674 417h1v4h-1zM675 417h1v4h-1zM676 416h1v5h-1zM677 416h1v5h-1zM678 415h1v6h-1zM679 417h1v4h-1zM680 417h1v4h-1zM681 417h1v4h-1zM682 417h1v4h-1zM683 417h1v4h-1zM684 417h1v5h-1zM685 417h1v4h-1zM686 417h1v4h-1zM687 417h1v6h-1zM688 416h1v6h-1zM689 417h1v4h-1zM690 417h1v4h-1zM691 417h1v4h-1zM692 417h1v4h-1zM693 417h1v4h-1zM694 417h1v4h-1zM695 417h1v4h-1zM696 417h1v4h-1zM697 417h1v4h-1zM698 417h1v4h-1zM699 417h1v4h-1zM700 417h1v3h-1zM701 417h1v4h-1zM702 417h1v4h-1zM703 417h1v4h-1zM704 417h1v4h-1zM705 417h1v4h-1zM706 417h1v4h-1zM707 416h1v5h-1zM708 417h1v4h-1zM709 417h1v4h-1zM710 417h1v4h-1zM711 417h1v4h-1zM712 417h1v4h-1zM713 415h1v6h-1zM714 417h1v4h-1zM715 417h1v4h-1zM716 417h1v4h-1zM717 417h1v4h-1zM718 417h1v4h-1zM719 417h1v4h-1zM720 416h1v5h-1zM721 415h1v6h-1zM722 417h1v4h-1zM723 417h1v4h-1zM724 417h1v4h-1zM725 417h1v5h-1zM726 417h1v4h-1zM727 417h1v4h-1zM728 417h1v3h-1zM729 417h1v4h-1zM730 417h1v4h-1zM731 417h1v4h-1zM732 417h1v4h-1zM733 415h1v6h-1zM734 417h1v4h-1zM735 417h1v4h-1zM736 417h1v4h-1zM737 417h1v6h-1zM738 417h1v4h-1zM739 417h1v6h-1zM740 417h1v4h-1zM741 417h1v4h-1zM742 417h1v4h-1zM743 417h1v4h-1zM744 417h1v4h-1zM745 417h1v3h-1zM746 417h1v5h-1zM747 416h1v5h-1zM748 416h1v5h-1zM749 417h1v4h-1zM750 417h1v4h-1zM751 417h1v4h-1zM752 416h1v5h-1zM753 417h1v5h-1zM754 417h1v6h-1zM755 417h1v4h-1zM756 417h1v4h-1zM757 417h1v4h-1zM758 417h1v4h-1zM759 417h1v4h-1zM760 417h1v4h-1zM761 417h1v4h-1zM762 417h1v5h-1zM763 417h1v4h-1zM764 416h1v5h-1zM765 417h1v4h-1zM766 417h1v4h-1zM767 415h1v6h-1zM768 417h1v4h-1zM769 417h1v4h-1zM770 417h1v4h-1zM771 417h1v4h-1zM772 417h1v4h-1zM773 417h1v4h-1zM774 417h1v4h-1zM775 417h1v6h-1zM776 417h1v4h-1zM777 417h1v4h-1zM400 283h1v136h-1z" fill="#E2E200"/><path d="M394.5 20.5h13v11l-6.5 3.5l-6.5-3.5z" fill="#000" stroke="#A020F0" stroke-width="1.3" shape-rendering="geometricPrecision"/><rect x="397" y="24" width="8" height="1" fill="#A020F0"/><rect x="400" y="25" width="2" height="6" fill="#A020F0"/><path d="M0.5 111.5h15l4 8.5l-4 8.5h-15z" fill="#000" stroke="#FF0000" stroke-width="1.2" shape-rendering="geometricPrecision"/><path d="M0.5 411.5h15l4 8.5l-4 8.5h-15z" fill="#000" stroke="#F0F000" stroke-width="1.2" shape-rendering="geometricPrecision"/><path d="M780 407.5L794 401V414z" fill="#A020E0" shape-rendering="geometricPrecision"/><g shape-rendering="geometricPrecision"><rect x="120" y="1" width="81" height="18" rx="9" fill="#E00000"/><rect x="250" y="1" width="301" height="18" rx="9" fill="#000"/><rect x="560" y="1" width="109" height="18" rx="9" fill="#000"/><circle cx="16.75" cy="9.75" r="6.3" fill="none" stroke="#E8A000" stroke-width="3"/><path d="M27.5 2V11.7A3.5 3.5 0 0 0 31 15.2H32.7A3.5 3.5 0 0 0 36.2 11.7V2M36.2 11.7A3.5 3.5 0 0 0 39.7 15.2H41.1A3.5 3.5 0 0 0 44.6 11.7V2" fill="none" stroke="#000" stroke-width="3"/><circle cx="55" cy="9.75" r="6.4" fill="none" stroke="#000" stroke-width="3"/><path d="M65.9 17.5V8.5A4.95 4.95 0 0 1 75.8 8.5V17.5" fill="none" stroke="#000" stroke-width="3.2"/></g><rect x="260" y="9" width="282" height="1" fill="#E0E000"/><rect x="294" y="2" width="2" height="17" fill="#A0A0A0"/><rect x="296" y="2" width="1" height="1" fill="#A0A0A0"/><rect x="296" y="17" width="1" height="2" fill="#A0A0A0"/><rect x="504" y="2" width="2" height="17" fill="#A0A0A0"/><rect x="503" y="2" width="1" height="1" fill="#A0A0A0"/><rect x="503" y="17" width="1" height="2" fill="#A0A0A0"/><rect x="398" y="2" width="6" height="2" fill="#FF00FF"/><rect x="400" y="4" width="2" height="3" fill="#FF00FF"/><path d="M563.5 3.5h13v10.5l-6.5 3.5l-6.5-3.5z" fill="#000" stroke="#A020F0" stroke-width="1.3" shape-rendering="geometricPrecision"/><rect x="566" y="7" width="8" height="1" fill="#A020F0"/><rect x="569" y="8" width="2" height="6" fill="#A020F0"/><path d="M756 2.5L758.3 4.8L760 6.2C760 4.3 760.8 3 762 3C763.5 3.2 764.2 5 763.6 6.5L760.6 9.6L759.2 10.8L756.3 7.8Z" fill="#30B818" stroke="#107010" stroke-width="0.5" shape-rendering="geometricPrecision"/><path d="M758 11.8L765.8 8.6L768.6 13.2L760.6 17Z" fill="#C0B8D8" stroke="#102060" stroke-width="0.9" shape-rendering="geometricPrecision"/><path d="M760.5 12.6l1.6-0.7l0.7 1.2l-1.6 0.7zM763.6 11.2l1.6-0.7l0.7 1.2l-1.6 0.7z" fill="#403060" shape-rendering="geometricPrecision"/><rect x="0" y="519" width="319" height="81" fill="#60A8A8"/><rect x="1" y="520" width="208" height="39" fill="#0080E0"/><rect x="211" y="520" width="106" height="39" fill="#0080E0"/><rect x="1" y="561" width="316" height="37" fill="#0080E0"/><g shape-rendering="geometricPrecision"><rect x="1" y="520" width="208" height="19" rx="4" fill="#000"/><rect x="1" y="540" width="208" height="19" rx="4" fill="#000"/><rect x="211" y="520" width="106" height="39" rx="5" fill="#000"/><rect x="1" y="561" width="316" height="36" rx="5" fill="#000"/></g><rect x="4" y="539" width="202" height="1" fill="#003C5C"/><rect x="5" y="597" width="308" height="1" fill="#003C5C"/><rect x="319" y="519" width="481" height="19" fill="#0080E0"/><rect x="319" y="538" width="481" height="61" fill="#0060A0"/><rect x="319" y="599" width="481" height="1" fill="#0080E0"/><g shape-rendering="geometricPrecision"><rect x="319" y="519.4" width="100" height="18.6" rx="9.3" fill="#000"/><rect x="665" y="520" width="130" height="18" rx="9" fill="#000"/><rect x="321" y="540" width="92" height="58" rx="3" fill="#0040B0"/><rect x="322" y="541" width="90" height="56" rx="2.5" fill="#004860"/><rect x="322" y="541" width="88" height="54" rx="2.5" fill="#70B0E8"/><rect x="323" y="542" width="87" height="53" rx="2" fill="#0080E0"/><rect x="596" y="540" width="92" height="58" rx="3" fill="#0040B0"/><rect x="597" y="541" width="90" height="56" rx="2.5" fill="#004860"/><rect x="597" y="541" width="88" height="54" rx="2.5" fill="#70B0E8"/><rect x="598" y="542" width="87" height="53" rx="2" fill="#0080E0"/></g><rect x="341" y="571" width="50" height="20" fill="#E0E0DE"/><g shape-rendering="geometricPrecision"><circle cx="10.5" cy="530" r="7.8" fill="#E00000"/><path d="M10.7 524.7v10.2M10.7 525.2l-2.3 2.6" fill="none" stroke="#000" stroke-width="1.6"/><circle cx="10.5" cy="550" r="7.8" fill="#E0E000"/><path d="M7.5 548C7.5 545.8 9.0 545.4 10.3 545.4C11.8 545.4 12.9 546.4 12.9 547.8C12.9 549.6 10.9 551 7.5 554.3H13.3" fill="none" stroke="#000" stroke-width="1.6"/><circle cx="9.5" cy="570.5" r="7.8" fill="#E00000"/><path d="M9.7 565.2v10.2M9.7 565.7l-2.3 2.6" fill="none" stroke="#000" stroke-width="1.6"/><circle cx="9.5" cy="589" r="7.8" fill="#E00000"/><path d="M9.7 583.7v10.2M9.7 584.2l-2.3 2.6" fill="none" stroke="#000" stroke-width="1.6"/><circle cx="168.5" cy="570.5" r="7.8" fill="#E0E000"/><path d="M165.5 568.5C165.5 566.3 167.0 565.9 168.3 565.9C169.8 565.9 170.9 566.9 170.9 568.3C170.9 570.1 168.9 571.5 165.5 574.8H171.3" fill="none" stroke="#000" stroke-width="1.6"/><circle cx="168.5" cy="589" r="7.8" fill="#E0E000"/><path d="M165.5 587C165.5 584.8 167.0 584.4 168.3 584.4C169.8 584.4 170.9 585.4 170.9 586.8C170.9 588.6 168.9 590 165.5 593.3H171.3" fill="none" stroke="#000" stroke-width="1.6"/><circle cx="675.5" cy="528.5" r="7.8" fill="#E0E000"/><path d="M672.5 526.5C672.5 524.3 674.0 523.9 675.3 523.9C676.8 523.9 677.9 524.9 677.9 526.3C677.9 528.1 675.9 529.5 672.5 532.8H678.3" fill="none" stroke="#000" stroke-width="1.6"/><path d="M9 115v11M9 115.5l-3.3 3.3" fill="none" stroke="#FF0000" stroke-width="2"/><path d="M4.5 418C4.5 415.8 6.2 415.2 8 415.2C10 415.2 11.6 416.2 11.6 418C11.6 420 9.5 421.3 4.3 424.5H12.5" fill="none" stroke="#F0F000" stroke-width="1.2"/></g><path d="M686 522.5h6.5l5 12h7.5" fill="none" stroke="#E8E8E8" stroke-width="1" shape-rendering="geometricPrecision"/></svg>
<div class="t" style="left:140.4px;top:3px;color:#000">Stop</div><div class="t" style="left:578.8px;top:4px;color:#F4F4F4;-webkit-text-stroke:0.2px #000">0.000ns</div><div class="t" style="left:17.8px;top:524px;color:#FF0808;-webkit-text-stroke:0.2px #000">500mv~</div><div class="t" style="left:105.8px;top:524px;color:#FF0808;-webkit-text-stroke:0.2px #000">3.00div</div><div class="t" style="left:18.3px;top:544px;color:#F0F000;-webkit-text-stroke:0.2px #000">1v-</div><div class="t" style="left:105.8px;top:544px;color:#F0F000;-webkit-text-stroke:0.2px #000">-3.00div</div><div class="t" style="left:218.8px;top:522px;color:#F4F4F4;-webkit-text-stroke:0.2px #000">(500KS/s)</div><div class="t" style="left:218.8px;top:542px;color:#F4F4F4;-webkit-text-stroke:0.2px #000">Depth:10K</div><div class="t" style="left:21.3px;top:563px;color:#FF0808;-webkit-text-stroke:0.2px #000">F:  ?</div><div class="t" style="left:21.3px;top:582px;color:#FF0808;-webkit-text-stroke:0.2px #000">Ma:20.00mv</div><div class="t" style="left:181.3px;top:563px;color:#F0F000;-webkit-text-stroke:0.2px #000">F:  ?</div><div class="t" style="left:181.3px;top:582px;color:#F0F000;-webkit-text-stroke:0.2px #000">Ma:2.760v</div><div class="t" style="left:333.7px;top:522px;color:#F4F4F4;-webkit-text-stroke:0.2px #000">M:1.0ms</div><div class="t" style="left:707.3px;top:523px;color:#F4F4F4;-webkit-text-stroke:0.2px #000">240mv</div><div class="t" style="left:346.2px;top:550px;color:#000">Type</div><div class="t" style="left:341.3px;top:574px;color:#000">Image</div><div class="t" style="left:622.3px;top:562px;color:#000">Save</div>
<svg width="800" height="600" style="position:absolute;left:0;top:0" shape-rendering="crispEdges"><rect x="582" y="9" width="2" height="3" fill="#000"/><rect x="602" y="9" width="2" height="3" fill="#000"/><rect x="612" y="9" width="2" height="3" fill="#000"/><rect x="622" y="9" width="2" height="3" fill="#000"/><rect x="31" y="529" width="2" height="3" fill="#000"/><rect x="41" y="529" width="2" height="3" fill="#000"/><rect x="129" y="529" width="2" height="3" fill="#000"/><rect x="139" y="529" width="2" height="3" fill="#000"/><rect x="139" y="549" width="2" height="3" fill="#000"/><rect x="149" y="549" width="2" height="3" fill="#000"/><rect x="242" y="527" width="2" height="3" fill="#000"/><rect x="252" y="527" width="2" height="3" fill="#000"/><rect x="292" y="547" width="2" height="3" fill="#000"/><rect x="64" y="587" width="2" height="3" fill="#000"/><rect x="84" y="587" width="2" height="3" fill="#000"/><rect x="94" y="587" width="2" height="3" fill="#000"/><rect x="254" y="587" width="2" height="3" fill="#000"/><rect x="377" y="527" width="2" height="3" fill="#000"/><rect x="730" y="528" width="2" height="3" fill="#000"/></svg>
</body></html>
